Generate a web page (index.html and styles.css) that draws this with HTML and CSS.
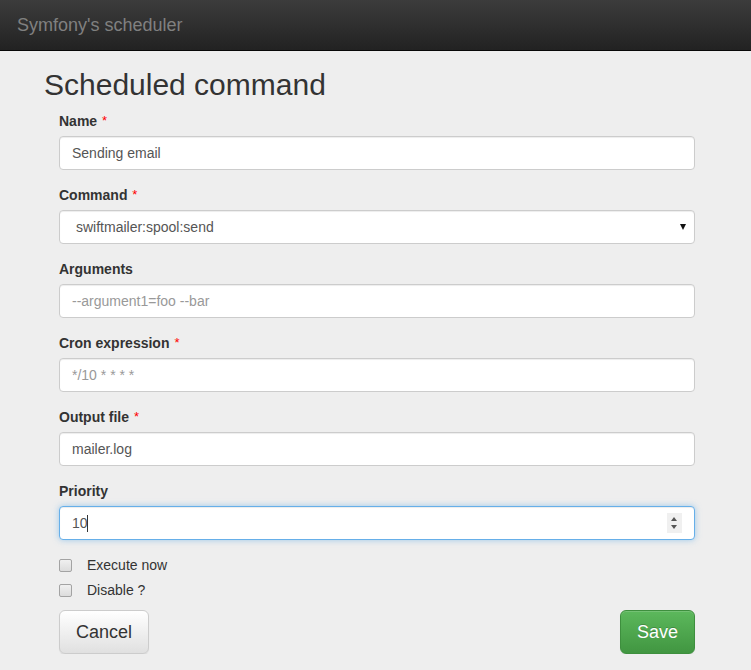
FILE: index.html
```html
<!DOCTYPE html>
<html>
<head>
<meta charset="utf-8">
<title>Symfony's scheduler</title>
<link rel="stylesheet" href="styles.css">
</head>
<body>
<nav class="navbar"><span class="brand">Symfony's scheduler</span></nav>
<main class="page">
  <h1 class="title">Scheduled command</h1>
  <form class="form">
    <div class="group">
      <label class="label">Name <span class="req">*</span></label>
      <input class="control" type="text" value="Sending email">
    </div>
    <div class="group">
      <label class="label">Command <span class="req">*</span></label>
      <div class="select-wrap">
        <select class="control select"><option>swiftmailer:spool:send</option></select>
      </div>
    </div>
    <div class="group">
      <label class="label">Arguments</label>
      <input class="control" type="text" placeholder="--argument1=foo --bar">
    </div>
    <div class="group">
      <label class="label">Cron expression <span class="req">*</span></label>
      <input class="control" type="text" placeholder="*/10 * * * *">
    </div>
    <div class="group">
      <label class="label">Output file <span class="req">*</span></label>
      <input class="control" type="text" value="mailer.log">
    </div>
    <div class="group">
      <label class="label">Priority</label>
      <div class="number-wrap">
        <input class="control focus" type="text" value="10">
        <span class="caret"></span>
        <span class="spinner"><span class="up"></span><span class="down"></span></span>
      </div>
    </div>
    <div class="check"><label class="check-label"><input class="box" type="checkbox"> Execute now</label></div>
    <div class="check second"><label class="check-label"><input class="box" type="checkbox"> Disable ?</label></div>
    <div class="actions">
      <button type="button" class="btn btn-cancel">Cancel</button>
      <button type="button" class="btn btn-save">Save</button>
    </div>
  </form>
</main>
</body>
</html>
```

FILE: styles.css
```css
* { box-sizing: border-box; }
html, body { margin: 0; padding: 0; }
body {
  background: #eeeeee;
  font-family: "Liberation Sans", Arial, sans-serif;
  font-size: 14px;
  line-height: 20px;
  color: #333;
}
.navbar {
  height: 51px;
  background: linear-gradient(to bottom, #3c3c3c 0%, #222222 100%);
  border-bottom: 1px solid #080808;
  padding: 15px 17px;
}
.brand {
  font-size: 18px;
  line-height: 20px;
  color: #808080;
}
.page {
  padding: 0 56px 0 44px;
}
.title {
  margin: 17px 0 10px;
  font-size: 30px;
  line-height: 33px;
  font-weight: 500;
  color: #333;
}
.form { padding-left: 15px; }
.group { margin-bottom: 15px; }
.label {
  display: block;
  font-weight: bold;
  margin-bottom: 5px;
  color: #333;
}
.req {
  color: #ff0000;
  font-weight: normal;
  font-size: 13px;
  vertical-align: 1px;
  margin-left: 1px;
}
.control {
  display: block;
  width: 100%;
  height: 34px;
  padding: 6px 12px;
  font-family: inherit;
  font-size: 14px;
  line-height: 20px;
  color: #555;
  background: #fff;
  border: 1px solid #ccc;
  border-radius: 4px;
  box-shadow: inset 0 1px 1px rgba(0,0,0,.075);
  outline: none;
  margin: 0;
}
.control::placeholder { color: #999; opacity: 1; }
.select-wrap { position: relative; }
.select {
  -webkit-appearance: none;
  appearance: none;
  padding-left: 16px;
}
.select-wrap::after {
  content: "";
  position: absolute;
  right: 9px;
  top: 14px;
  border-left: 3px solid transparent;
  border-right: 3px solid transparent;
  border-top: 6px solid #111;
}
.number-wrap { position: relative; }
.focus {
  border-color: #66afe9;
  box-shadow: inset 0 1px 1px rgba(0,0,0,.075), 0 0 6px rgba(102,175,233,.6);
}
.caret {
  position: absolute;
  left: 28px;
  top: 9px;
  width: 1px;
  height: 17px;
  background: #333;
}
.spinner {
  position: absolute;
  right: 13px;
  top: 7px;
  width: 15px;
  height: 20px;
  background: #f0f0f0;
}
.spinner .up, .spinner .down {
  position: absolute;
  left: 4px;
  border-left: 3.5px solid transparent;
  border-right: 3.5px solid transparent;
}
.spinner .up { top: 4px; border-bottom: 4px solid #555; }
.spinner .down { bottom: 4px; border-top: 4px solid #555; }
.check { margin: 15px 0 10px; }
.check.second { margin-top: -5px; }
.check-label {
  display: flex;
  align-items: center;
  min-height: 20px;
  gap: 15px;
  color: #333;
}
.box {
  -webkit-appearance: none;
  appearance: none;
  width: 13px;
  height: 13px;
  margin: 0;
  border: 1px solid #a3a3a3;
  border-radius: 2px;
  background: linear-gradient(to bottom, #f0f0f0, #dcdcdc);
}
.actions {
  display: flex;
  justify-content: space-between;
}
.btn {
  font-family: inherit;
  font-size: 18px;
  line-height: 24px;
  padding: 9px 16px;
  border-radius: 6px;
  cursor: pointer;
}
.btn-cancel {
  color: #333;
  border: 1px solid #ccc;
  background: linear-gradient(to bottom, #ffffff 0%, #e0e0e0 100%);
  box-shadow: inset 0 1px 0 rgba(255,255,255,.15), 0 1px 1px rgba(0,0,0,.075);
}
.btn-save {
  color: #fff;
  border: 1px solid #3e8f3e;
  background: linear-gradient(to bottom, #5cb85c 0%, #419641 100%);
  text-shadow: 0 -1px 0 rgba(0,0,0,.2);
  box-shadow: inset 0 1px 0 rgba(255,255,255,.15), 0 1px 1px rgba(0,0,0,.075);
}
```
